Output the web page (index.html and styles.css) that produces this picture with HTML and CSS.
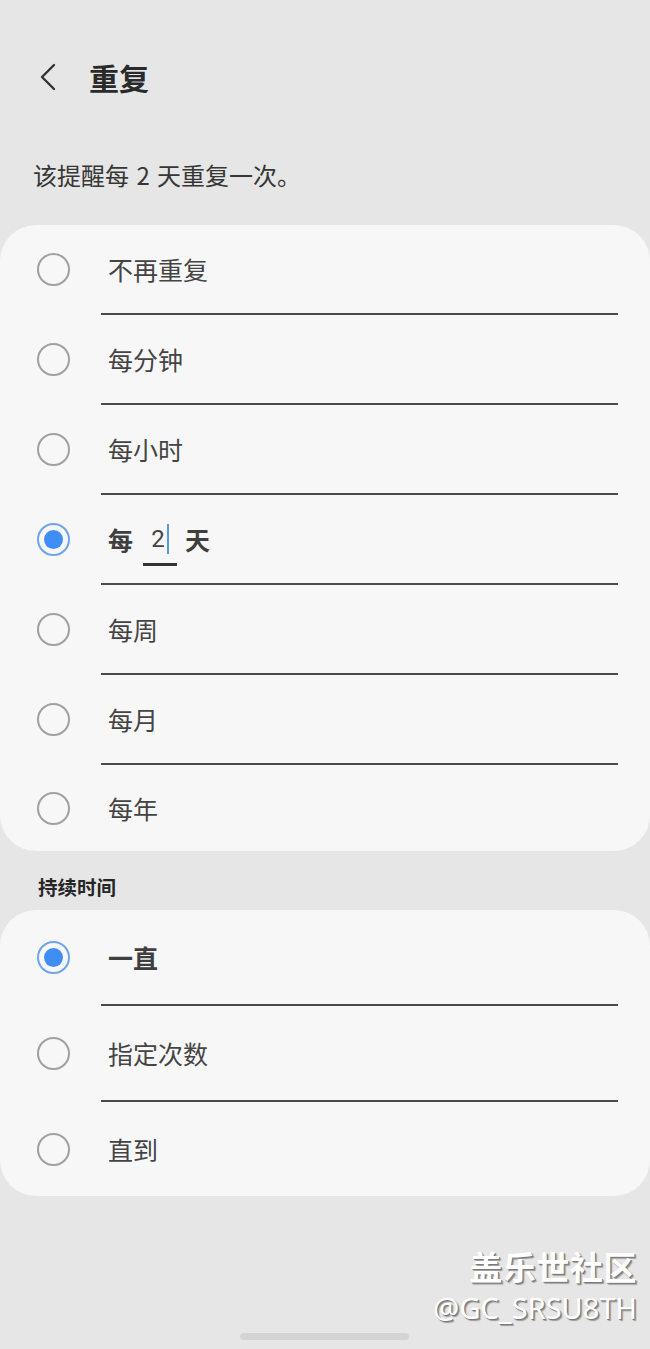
FILE: index.html
```html
<!DOCTYPE html>
<html lang="zh">
<head>
<meta charset="utf-8">
<link rel="stylesheet" href="styles.css">
</head>
<body>
<div class="screen">
  <div class="appbar">
    <svg class="back" width="22" height="30" viewBox="0 0 22 30"><polyline points="17,3 5,15 17,27" fill="none" stroke="#333" stroke-width="2.4" stroke-linecap="round" stroke-linejoin="round"/></svg>
    <h1 class="title">重复</h1>
  </div>
  <p class="summary">该提醒每 2 天重复一次。</p>

  <div class="card">
    <div class="row"><span class="radio"></span><div class="content"><span class="label">不再重复</span></div></div>
    <div class="row"><span class="radio"></span><div class="content"><span class="label">每分钟</span></div></div>
    <div class="row"><span class="radio"></span><div class="content"><span class="label">每小时</span></div></div>
    <div class="row"><span class="radio on"></span><div class="content"><span class="label strong">每</span><span class="field"><span class="num">2</span><span class="caret"></span></span><span class="label strong">天</span></div></div>
    <div class="row"><span class="radio"></span><div class="content"><span class="label">每周</span></div></div>
    <div class="row"><span class="radio"></span><div class="content"><span class="label">每月</span></div></div>
    <div class="row last"><span class="radio"></span><div class="content"><span class="label">每年</span></div></div>
  </div>

  <h2 class="section">持续时间</h2>

  <div class="card card2">
    <div class="row"><span class="radio on"></span><div class="content"><span class="label strong">一直</span></div></div>
    <div class="row"><span class="radio"></span><div class="content"><span class="label">指定次数</span></div></div>
    <div class="row last"><span class="radio"></span><div class="content"><span class="label">直到</span></div></div>
  </div>

  <div class="watermark">
    <div class="wm1">盖乐世社区</div>
    <div class="wm2">@GC_SRSU8TH</div>
  </div>
  <div class="home"></div>
</div>
</body>
</html>
```

FILE: styles.css
```css
* { box-sizing: border-box; }
html, body { margin: 0; padding: 0; }
body {
  background: #e6e6e6;
  font-family: "Noto Sans CJK SC", "Noto Sans", Roboto, sans-serif;
  color: #333;
}
.screen {
  position: relative;
  width: 650px;
  height: 1349px;
  overflow: hidden;
  padding-top: 55px;
}
.appbar {
  display: flex;
  align-items: center;
  height: 44px;
  padding-left: 37px;
}
.back { display: block; margin-right: 30px; }
.title {
  margin: 0;
  font-size: 30px;
  font-weight: 700;
  line-height: 44px;
  color: #2a2a2a;
}
.summary {
  margin: 61px 0 0 33px;
  font-size: 24px;
  line-height: 30px;
  word-spacing: 2px;
  color: #363636;
}
.card {
  margin-top: 35px;
  background: #f7f7f7;
  border-radius: 36px;
}
.row {
  display: flex;
  align-items: stretch;
  height: 90px;
}
.row.last { height: 86px; }
.card2 .row { height: 96px; }
.card2 .row.last { height: 94px; }
.radio {
  align-self: center;
  flex: none;
  width: 33px;
  height: 33px;
  margin-left: 37px;
  border: 2px solid #a0a0a0;
  border-radius: 50%;
  position: relative;
}
.row:not(.last) .radio { margin-top: -2px; }
.radio.on { border-color: #6ea4ee; }
.radio.on::after {
  content: "";
  position: absolute;
  left: 5px; top: 5px;
  width: 19px; height: 19px;
  border-radius: 50%;
  background: #3e8ef5;
}
.content {
  flex: 1;
  display: flex;
  align-items: center;
  margin: 0 32px 0 31px;
  padding-left: 7px;
  border-bottom: 2px solid #4a4a4a;
}
.row.last .content { border-bottom: 0; }
.label {
  font-size: 25px;
  line-height: 32px;
  color: #444;
}
.label.strong { font-weight: 700; color: #3f3f3f; }
.field {
  position: relative;
  display: flex;
  justify-content: center;
  align-items: center;
  width: 34px;
  height: 44px;
  margin: 10px 8px 0 10px;
  border-bottom: 3px solid #333;
}
.num {
  font-family: Roboto, "Noto Sans", sans-serif;
  font-size: 24px;
  color: #444;
  margin-left: -4px;
  margin-top: -8px;
}
.caret {
  position: absolute;
  left: 24px;
  top: 2px;
  width: 2px;
  height: 30px;
  background: #5b9ad8;
}
.section {
  margin: 24px 0 0 38px;
  font-size: 19.5px;
  font-weight: 700;
  line-height: 24px;
  color: #262626;
}
.card2 { margin-top: 11px; }
.watermark {
  position: absolute;
  right: 13px;
  top: 1244px;
  text-align: right;
  color: #fff;
  text-shadow: 1px 1px 0 #7a7a7a, 2px 2px 1px #9a9a9a;
  font-family: "Noto Sans CJK SC", sans-serif;
}
.wm1 { font-size: 33px; font-weight: 700; line-height: 44px; letter-spacing: 0.5px; }
.wm2 { font-family: "Noto Sans", "Open Sans", sans-serif; font-size: 29px; line-height: 40px; }
.home {
  position: absolute;
  left: 240px;
  top: 1333px;
  width: 169px;
  height: 7px;
  border-radius: 4px;
  background: #d4d4d4;
}
```
